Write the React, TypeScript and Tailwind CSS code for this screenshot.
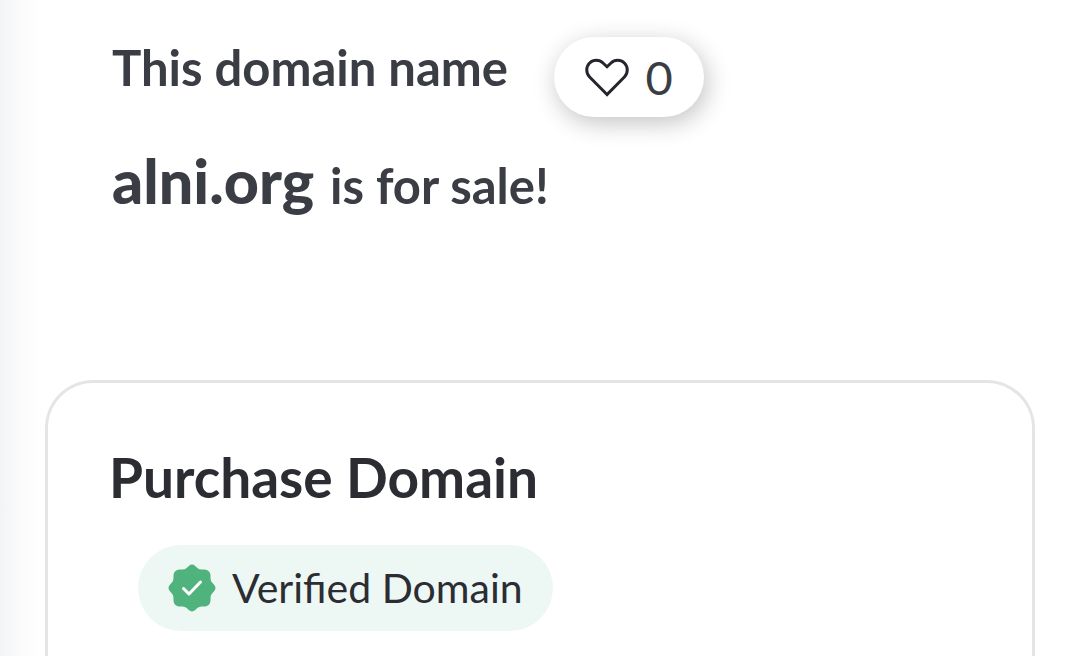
import { useState } from 'react';

const HeartIcon = () => (
  <svg viewBox="0 0 44 40" className="w-11 h-10 shrink-0" fill="none" aria-hidden="true">
    <path
      d="M22 37.5 4.6 20C0.8 16.2 0.8 9.8 4.6 6C8.4 2.2 14.2 2.2 18 6L22 9.8L26 6C29.8 2.2 35.6 2.2 39.4 6C43.2 9.8 43.2 16.2 39.4 20Z"
      stroke="#25262b"
      strokeWidth="3"
      strokeLinejoin="miter"
    />
  </svg>
);

const VerifiedIcon = () => (
  <svg viewBox="0 0 48 48" className="w-12 h-12 shrink-0" aria-hidden="true">
    <path
      d="M20.8 1.9Q24 -0.9 27.2 1.9L29.4 3.9Q31.2 5.5 33.6 5.4L36.6 5.4Q41.8 6.2 42.4 10.4L42.6 14.4Q42.5 16.8 44.1 18.6L46.1 20.8Q48.9 24 46.1 27.2L44.1 29.4Q42.5 31.2 42.6 33.6L42.4 37.6Q41.8 41.8 37.6 42.4L33.6 42.6Q31.2 42.5 29.4 44.1L27.2 46.1Q24 48.9 20.8 46.1L18.6 44.1Q16.8 42.5 14.4 42.6L10.4 42.4Q6.2 41.8 5.6 37.6L5.4 33.6Q5.5 31.2 3.9 29.4L1.9 27.2Q-0.9 24 1.9 20.8L3.9 18.6Q5.5 16.8 5.4 14.4L5.6 10.4Q6.2 6.2 11.4 5.4L14.4 5.4Q16.8 5.5 18.6 3.9Z"
      fill="#50b37e"
    />
    <path
      d="M15.5 24.5 21 30 32.5 18"
      fill="none"
      stroke="#fff"
      strokeWidth="3"
      strokeLinecap="round"
      strokeLinejoin="round"
    />
  </svg>
);

export default function App() {
  const [likes, setLikes] = useState(0);

  return (
    <main className="min-h-screen flex flex-col bg-[linear-gradient(to_right,#f3f4f7,#fcfcfd_24px,#fff_44px)] px-[45px] font-['Lato',sans-serif]">
      {/* Heading and like counter */}
      <header className="h-[380px] pl-[67px] pt-[37px] text-[#3b3d45]">
        <div className="flex items-start gap-[46px]">
          <h1 className="text-[49px] leading-[60px] font-bold whitespace-nowrap">This domain name</h1>
          <button
            type="button"
            aria-label="Like this domain"
            onClick={() => setLikes(likes + 1)}
            className="flex items-center justify-center gap-4 w-[150px] h-20 rounded-full bg-white text-[47px] leading-[60px] shadow-[3px_6px_24px_rgba(0,0,0,0.24)]"
          >
            <HeartIcon />
            <span>{likes}</span>
          </button>
        </div>
        <p className="mt-7 text-[49px] leading-[72px] font-bold">
          <strong className="mr-1 text-[61px]">alni.org</strong> is for sale!
        </p>
      </header>

      {/* Purchase card */}
      <section className="flex-1 rounded-t-[48px] border-[3px] border-b-0 border-[#e5e5e5] bg-white px-[61px] pt-[62px]">
        <h2 className="text-[55px] leading-[64px] font-bold text-[#2b2d33]">Purchase Domain</h2>
        <div className="mt-9 ml-[29px] inline-flex items-center gap-4 h-[86px] rounded-full bg-[#edf8f5] px-[30px] text-[41px] leading-[48px] text-[#2b2d33]">
          <VerifiedIcon />
          <span>Verified Domain</span>
        </div>
      </section>
    </main>
  );
}
